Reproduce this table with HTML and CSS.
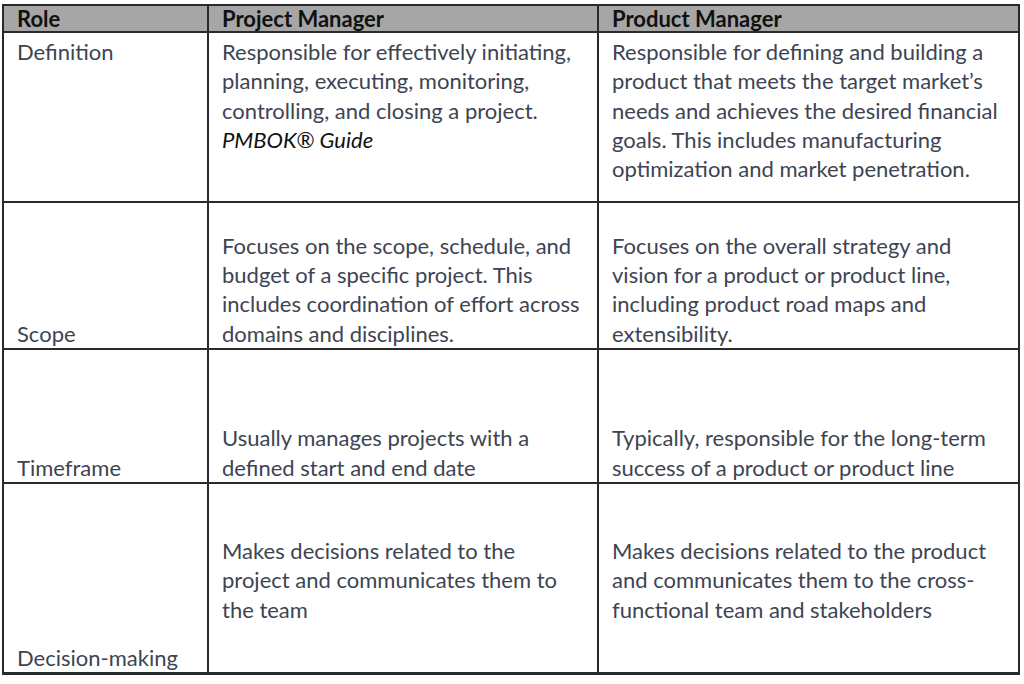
FILE: index.html
```html
<!DOCTYPE html>
<html>
<head>
<meta charset="utf-8">
<link rel="stylesheet" href="styles.css">
</head>
<body>
<table class="cmp">
  <colgroup>
    <col class="c-role">
    <col class="c-proj">
    <col class="c-prod">
  </colgroup>
  <thead>
    <tr class="head">
      <th>Role</th>
      <th>Project Manager</th>
      <th>Product Manager</th>
    </tr>
  </thead>
  <tbody>
    <tr class="r-def">
      <td class="top">Definition</td>
      <td class="top">Responsible for effectively initiating,<br>planning, executing, monitoring,<br>controlling, and closing a project.<br><em class="src">PMBOK® Guide</em></td>
      <td class="top">Responsible for defining and building a<br>product that meets the target market’s<br>needs and achieves the desired financial<br>goals. This includes manufacturing<br>optimization and market penetration.</td>
    </tr>
    <tr class="r-scope">
      <td class="bot">Scope</td>
      <td class="bot">Focuses on the scope, schedule, and<br>budget of a specific project. This<br>includes coordination of effort across<br>domains and disciplines.</td>
      <td class="bot">Focuses on the overall strategy and<br>vision for a product or product line,<br>including product road maps and<br>extensibility.</td>
    </tr>
    <tr class="r-time">
      <td class="bot">Timeframe</td>
      <td class="bot">Usually manages projects with a<br>defined start and end date</td>
      <td class="bot">Typically, responsible for the long-term<br>success of a product or product line</td>
    </tr>
    <tr class="r-dec">
      <td class="bot">Decision-making</td>
      <td class="mid">Makes decisions related to the<br>project and communicates them to<br>the team</td>
      <td class="mid">Makes decisions related to the product<br>and communicates them to the cross-<br>functional team and stakeholders</td>
    </tr>
  </tbody>
</table>
</body>
</html>
```

FILE: styles.css
```css
html, body {
  margin: 0;
  padding: 0;
  background: #ffffff;
}

body {
  padding: 4px 0 0 2px;
  font-family: Lato, "Liberation Sans", sans-serif;
}

.cmp {
  border-collapse: collapse;
  table-layout: fixed;
  width: 1016px;
  font-size: 22px;
  line-height: 29.3px;
  color: #3d4452;
}

.c-role { width: 205px; }
.c-proj { width: 390px; }
.c-prod { width: 421px; }

.cmp th,
.cmp td {
  border: 2px solid #2a2a2a;
  padding: 0 4px 0 13px;
  text-align: left;
  white-space: nowrap;
}

.head th {
  background: #a6a6a6;
  color: #111111;
  font-weight: 700;
  height: 25px;
  line-height: 24px;
  padding-top: 0;
  padding-bottom: 0;
  vertical-align: middle;
}

.cmp tbody tr:last-child td {
  border-bottom-width: 3px;
}

.cmp td.top { vertical-align: top; padding-top: 4px; }
.cmp td.bot { vertical-align: bottom; padding-bottom: 0; }
.cmp td.mid { vertical-align: middle; padding-top: 4px; }

.r-def td { height: 164px; }
.r-scope td { height: 145px; }
.r-time td { height: 132px; }
.r-dec td { height: 188px; }
.r-dec td.mid { height: 184px; }

.src {
  color: #111111;
  font-style: italic;
}
```
